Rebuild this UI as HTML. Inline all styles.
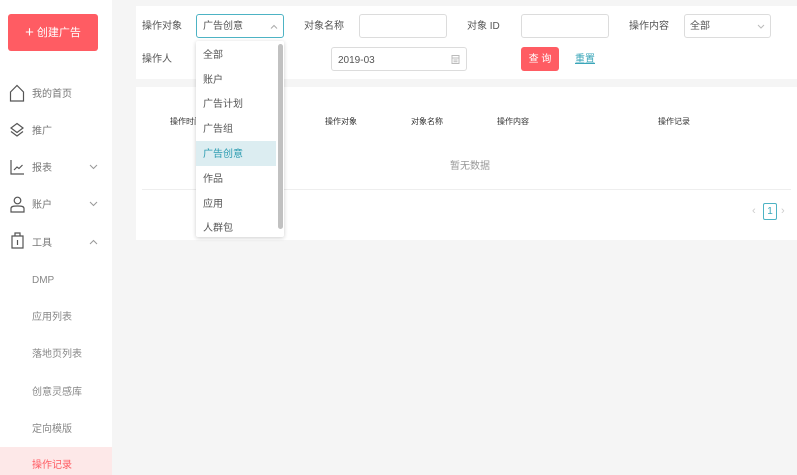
<!DOCTYPE html>
<html><head><meta charset="utf-8"><style>
*{margin:0;padding:0;box-sizing:border-box}
body{width:797px;height:475px;overflow:hidden;background:#f5f5f5;font-family:"Liberation Sans","Noto Sans CJK SC",sans-serif;font-size:10px;color:#555;position:relative}
.a{position:absolute}
.side{left:0;top:0;width:112px;height:475px;background:#fff}
.btn{left:8px;top:14px;width:90px;height:37px;background:#ff5c63;border-radius:3px;color:#fff;font-size:11px;text-align:center;line-height:38px}
.mi{left:32px;color:#777;font-size:10px;line-height:12px}
.chev{left:89px}
.card{background:#fff}
.inp{border:1px solid #dcdcdc;border-radius:3px;background:#fff;height:24px}
.lbl{font-size:10px;color:#555;line-height:12px}
.th{font-size:8px;color:#333;line-height:10px}
.dd{left:196px;top:41px;width:88px;height:196px;background:#fff;box-shadow:0 1px 4px rgba(0,0,0,.2);border-radius:2px}
.it{position:absolute;left:0;width:80px;height:25px;line-height:27px;padding-left:7px;color:#555;font-size:10px}
</style></head><body>
<div class="a side"></div>
<div class="a btn"><span style="font-size:15px;vertical-align:-1px">+</span> 创建广告</div>

<svg class="a" style="left:9px;top:84px" width="16" height="18" viewBox="0 0 16 18" fill="none" stroke="#555" stroke-width="1.2"><path d="M1.5 8 8 1.5 14.5 8V17H1.5Z"/></svg>
<div class="a mi" style="top:89px">我的首页</div>
<svg class="a" style="left:9px;top:122px" width="16" height="16" viewBox="0 0 16 16" fill="none" stroke="#555" stroke-width="1.2"><path d="M8 1.5 14 6 8 10.5 2 6Z"/><path d="M2 9.5 8 14 14 9.5"/></svg>
<div class="a mi" style="top:126px">推广</div>
<svg class="a" style="left:10px;top:159px" width="15" height="16" viewBox="0 0 15 16" fill="none" stroke="#555" stroke-width="1.2"><path d="M1 1V15H14"/><path d="M4 11 7 8 9 9.5 12.5 6"/></svg>
<div class="a mi" style="top:163px">报表</div>
<svg class="a chev" style="top:164px" width="9" height="6" viewBox="0 0 9 6" fill="none" stroke="#999" stroke-width="1"><path d="M1 1 4.5 4.5 8 1"/></svg>
<svg class="a" style="left:10px;top:196px" width="15" height="17" viewBox="0 0 15 17" fill="none" stroke="#555" stroke-width="1.2"><circle cx="7.5" cy="4.5" r="3.3"/><path d="M1 16V12.5C1 10.5 3 10 7.5 10S14 10.5 14 12.5V16Z"/></svg>
<div class="a mi" style="top:200px">账户</div>
<svg class="a chev" style="top:201px" width="9" height="6" viewBox="0 0 9 6" fill="none" stroke="#999" stroke-width="1"><path d="M1 1 4.5 4.5 8 1"/></svg>
<svg class="a" style="left:11px;top:232px" width="13" height="17" viewBox="0 0 13 17" fill="none" stroke="#555" stroke-width="1.2"><path d="M1 4H12V16H1Z"/><path d="M4 4V1H9V4"/><path d="M6.5 8V13"/></svg>
<div class="a mi" style="top:238px">工具</div>
<svg class="a chev" style="top:239px" width="9" height="6" viewBox="0 0 9 6" fill="none" stroke="#999" stroke-width="1"><path d="M1 5 4.5 1.5 8 5"/></svg>
<div class="a mi" style="top:275px;color:#888">DMP</div>
<div class="a mi" style="top:312px;color:#888">应用列表</div>
<div class="a mi" style="top:349px;color:#888">落地页列表</div>
<div class="a mi" style="top:387px;color:#888">创意灵感库</div>
<div class="a mi" style="top:424px;color:#888">定向模版</div>
<div class="a" style="left:0;top:447px;width:112px;height:28px;background:#fde8e8"></div>
<div class="a mi" style="top:460px;color:#ff5c63">操作记录</div>

<div class="a card" style="left:136px;top:6px;width:661px;height:73px"></div>
<div class="a lbl" style="left:142px;top:21px">操作对象</div>
<div class="a inp" style="left:196px;top:14px;width:88px;border-color:#4db3c4"></div>
<div class="a lbl" style="left:203px;top:21px">广告创意</div>
<svg class="a" style="left:270px;top:24px" width="8" height="5" viewBox="0 0 8 5" fill="none" stroke="#aaa" stroke-width="1"><path d="M1 4.5 4 1.5 7 4.5"/></svg>
<div class="a lbl" style="left:304px;top:21px">对象名称</div>
<div class="a inp" style="left:359px;top:14px;width:88px"></div>
<div class="a lbl" style="left:467px;top:21px">对象 ID</div>
<div class="a inp" style="left:521px;top:14px;width:88px"></div>
<div class="a lbl" style="left:629px;top:21px">操作内容</div>
<div class="a inp" style="left:684px;top:14px;width:87px"></div>
<div class="a lbl" style="left:690px;top:21px">全部</div>
<svg class="a" style="left:757px;top:24px" width="8" height="5" viewBox="0 0 8 5" fill="none" stroke="#bbb" stroke-width="1"><path d="M1 1 4 4 7 1"/></svg>
<div class="a lbl" style="left:142px;top:54px">操作人</div>
<div class="a inp" style="left:331px;top:47px;width:136px"></div>
<div class="a lbl" style="left:338px;top:55px">2019-03</div>
<svg class="a" style="left:451px;top:54px" width="9" height="10" viewBox="0 0 9 10" fill="none" stroke="#bbb" stroke-width="1"><rect x="1" y="1.5" width="7" height="8"/><path d="M1 4H8M2.5 6H6.5M2.5 7.8H6.5"/></svg>
<div class="a" style="left:521px;top:47px;width:38px;height:24px;background:#ff5c63;border-radius:3px;color:#fff;text-align:center;line-height:25px;font-size:10px">查 询</div>
<div class="a lbl" style="left:575px;top:54px;color:#3aa6b9;text-decoration:underline">重置</div>

<div class="a card" style="left:136px;top:87px;width:661px;height:153px"></div>
<div class="a th" style="left:170px;top:117px">操作时间</div>
<div class="a th" style="left:325px;top:117px">操作对象</div>
<div class="a th" style="left:411px;top:117px">对象名称</div>
<div class="a th" style="left:497px;top:117px">操作内容</div>
<div class="a th" style="left:658px;top:117px">操作记录</div>
<div class="a" style="left:450px;top:161px;color:#999;font-size:10px;line-height:12px">暂无数据</div>
<div class="a" style="left:142px;top:189px;width:649px;height:1px;background:#eee"></div>
<div class="a" style="left:752px;top:205px;color:#ccc;font-size:11px">‹</div>
<div class="a" style="left:763px;top:203px;width:14px;height:17px;border:1px solid #4db3c4;border-radius:2px;color:#3aa6b9;text-align:center;line-height:15px;font-size:10px">1</div>
<div class="a" style="left:781px;top:205px;color:#ccc;font-size:11px">›</div>

<div class="a dd">
<div class="it" style="top:1px">全部</div>
<div class="it" style="top:26px">账户</div>
<div class="it" style="top:50px">广告计划</div>
<div class="it" style="top:75px">广告组</div>
<div class="it" style="top:100px;background:#dcedf1;color:#2a9bb0">广告创意</div>
<div class="it" style="top:125px">作品</div>
<div class="it" style="top:150px">应用</div>
<div class="it" style="top:174px">人群包</div>
<div class="a" style="left:82px;top:3px;width:5px;height:185px;background:#c1c1c1;border-radius:3px"></div>
</div>
</body></html>
